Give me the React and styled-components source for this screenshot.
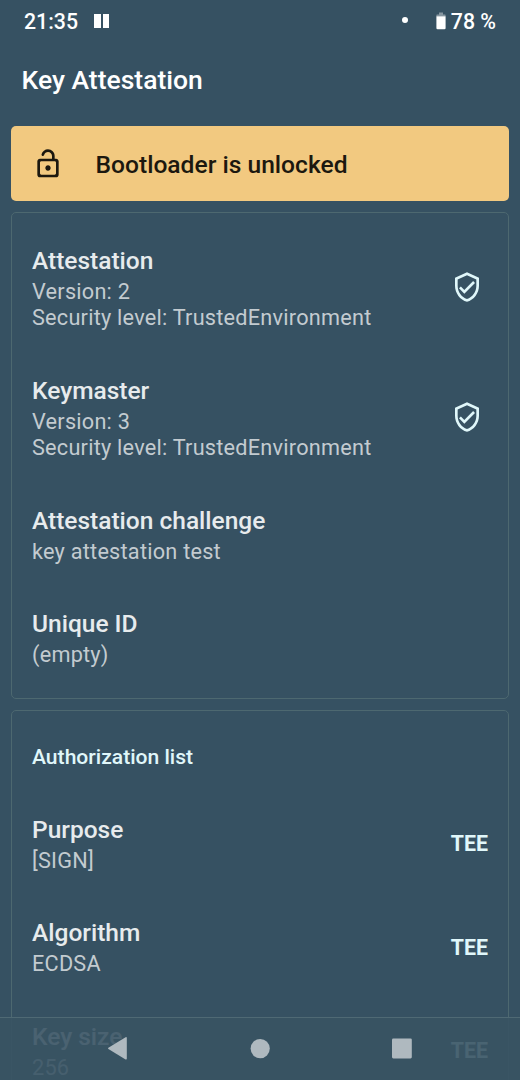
import React from 'react'
import styled, { createGlobalStyle } from 'styled-components'

const general = [
  {
    title: 'Attestation',
    lines: ['Version: 2', 'Security level: TrustedEnvironment'],
    secure: true,
  },
  {
    title: 'Keymaster',
    lines: ['Version: 3', 'Security level: TrustedEnvironment'],
    secure: true,
  },
  { title: 'Attestation challenge', lines: ['key attestation test'] },
  { title: 'Unique ID', lines: ['(empty)'] },
]

const authorizations = [
  { title: 'Purpose', lines: ['[SIGN]'], tag: 'TEE' },
  { title: 'Algorithm', lines: ['ECDSA'], tag: 'TEE' },
  { title: 'Key size', lines: ['256'], tag: 'TEE' },
]

export default function App() {
  return (
    <Screen>
      <GlobalStyle />
      <StatusBar>
        <Clock>21:35</Clock>
        <Pause>
          <span />
          <span />
        </Pause>
        <Dot />
        <BatteryIcon />
        <Percent>78 %</Percent>
      </StatusBar>
      <Toolbar>Key Attestation</Toolbar>
      <Content>
        <Banner>
          <UnlockIcon />
          <span>Bootloader is unlocked</span>
        </Banner>
        <Card>
          {general.map((item) => (
            <Item key={item.title} {...item} />
          ))}
        </Card>
        <Card>
          <CardHeader>Authorization list</CardHeader>
          {authorizations.map((item) => (
            <Item key={item.title} {...item} />
          ))}
        </Card>
      </Content>
      <NavBar>
        <svg width="520" height="62" viewBox="0 0 520 62">
          <path d="M125.6 19.2q1.2-.6 1.2.8v20.6q0 1.4-1.2.8L108.4 31.1q-.8-.8 0-1.4z" />
          <circle cx="260.2" cy="30.6" r="9.6" />
          <rect x="392" y="20.4" width="19.8" height="20" rx="1.3" />
        </svg>
      </NavBar>
    </Screen>
  )
}

function Item({ title, lines, secure, tag }) {
  return (
    <Row>
      <RowText>
        <h2>{title}</h2>
        {lines.map((line) => (
          <p key={line}>{line}</p>
        ))}
      </RowText>
      {secure && <ShieldIcon />}
      {tag && <Tag>{tag}</Tag>}
    </Row>
  )
}

function ShieldIcon() {
  return (
    <Shield viewBox="0 0 24 24">
      <path d="M12 1L3 5v6c0 5.55 3.84 10.74 9 12 5.16-1.26 9-6.45 9-12V5l-9-4zm7 10c0 4.52-2.98 8.69-7 9.93-4.02-1.24-7-5.41-7-9.93V6.3l7-3.11 7 3.11V11zm-11.59.59L6 13l4 4 8-8-1.41-1.42L10 14.17z" />
    </Shield>
  )
}

function UnlockIcon() {
  return (
    <Lock viewBox="0 0 24 24">
      <path d="M18 8h-1V6c0-2.76-2.24-5-5-5-2.28 0-4.27 1.54-4.84 3.75-.14.54.18 1.08.72 1.22.53.14 1.08-.18 1.22-.72C9.44 3.93 10.63 3 12 3c1.65 0 3 1.35 3 3v2H6c-1.1 0-2 .9-2 2v10c0 1.1.9 2 2 2h12c1.1 0 2-.9 2-2V10c0-1.1-.9-2-2-2zm0 11c0 .55-.45 1-1 1H7c-.55 0-1-.45-1-1v-8c0-.55.45-1 1-1h10c.55 0 1 .45 1 1v8zm-6-6c-1.1 0-2 .9-2 2s.9 2 2 2 2-.9 2-2-.9-2-2-2z" />
    </Lock>
  )
}

function BatteryIcon() {
  return (
    <Battery viewBox="0 0 10 18">
      <path d="M3 .6h4v1.8h2q.6 0 .6.6v1.2H.4V3q0-.6.6-.6h2z" opacity=".4" />
      <path d="M.4 4.2h9.2V16q0 1.2-1.2 1.2H1.6Q.4 17.2.4 16z" />
    </Battery>
  )
}

const GlobalStyle = createGlobalStyle`
  body {
    margin: 0;
    background: #365162;
    font-family: Roboto, 'Liberation Sans', sans-serif;
  }
`

const Screen = styled.main`
  position: relative;
  display: flex;
  flex-direction: column;
  width: 520px;
  height: 1080px;
  overflow: hidden;
  background: #365162;
`

const StatusBar = styled.header`
  display: flex;
  align-items: center;
  flex: none;
  height: 42px;
  padding: 0 24px;
  color: #fff;
  font-size: 21.3px;
  font-weight: 500;
`

const Clock = styled.span`
  width: 70px;
  padding-top: 1px;
`

const Pause = styled.span`
  display: flex;
  gap: 2px;
  margin-bottom: 1px;

  span {
    width: 6.5px;
    height: 14px;
    background: #fff;
  }
`

const Dot = styled.span`
  width: 6px;
  height: 6px;
  margin-left: auto;
  margin-bottom: 2px;
  border-radius: 50%;
  background: #fff;
`

const Battery = styled.svg`
  width: 10px;
  height: 18px;
  margin-left: 28px;
  fill: #fff;
`

const Percent = styled.span`
  margin-left: 5px;
  padding-top: 1px;
`

const Toolbar = styled.h1`
  display: flex;
  align-items: center;
  flex: none;
  height: 74px;
  margin: 0;
  padding: 0 21.5px;
  color: #fff;
  font-size: 26.5px;
  font-weight: 500;
`

const Content = styled.section`
  display: flex;
  flex-direction: column;
  gap: 11px;
  padding: 10px 11px 0;
`

const Banner = styled.section`
  display: flex;
  align-items: center;
  gap: 32px;
  height: 75px;
  padding-left: 20.5px;
  box-sizing: border-box;
  border-radius: 5px;
  background: #f2c980;
  color: #1c180f;
  font-size: 24.6px;
  font-weight: 500;

  span {
    padding-top: 2px;
  }
`

const Lock = styled.svg`
  width: 32px;
  height: 32px;
  fill: currentColor;
`

const Card = styled.section`
  flex: none;
  padding: 9px 20px;
  border: 1px solid #4d6870;
  border-radius: 5px;
`

const CardHeader = styled.h3`
  display: flex;
  align-items: center;
  box-sizing: border-box;
  height: 71px;
  margin: 0;
  padding-top: 1px;
  color: #e0f7fa;
  font-size: 21.1px;
  font-weight: 500;
`

const Row = styled.article`
  display: flex;
  align-items: center;
  justify-content: space-between;
  padding: 20.5px 0;
`

const RowText = styled.div`
  h2 {
    margin: 0;
    padding: 1px 0;
    color: #e7ebed;
    font-size: 24.5px;
    font-weight: 500;
    line-height: 34px;
  }

  p {
    margin: 0;
    color: #c3cbd0;
    font-size: 21.7px;
    letter-spacing: 0.23px;
    line-height: 26.5px;
  }
`

const Shield = styled.svg`
  width: 32px;
  height: 32px;
  margin-right: 5px;
  fill: #e0f7fa;
`

const Tag = styled.span`
  padding-top: 2px;
  color: #e0f7fa;
  font-size: 21.3px;
  font-weight: 700;
`

const NavBar = styled.nav`
  position: absolute;
  left: 0;
  bottom: 0;
  width: 520px;
  height: 62px;
  border-top: 1px solid #4f6974;
  background: rgba(56, 83, 99, 0.9);

  svg {
    display: block;
    fill: #afb9bf;
  }
`
